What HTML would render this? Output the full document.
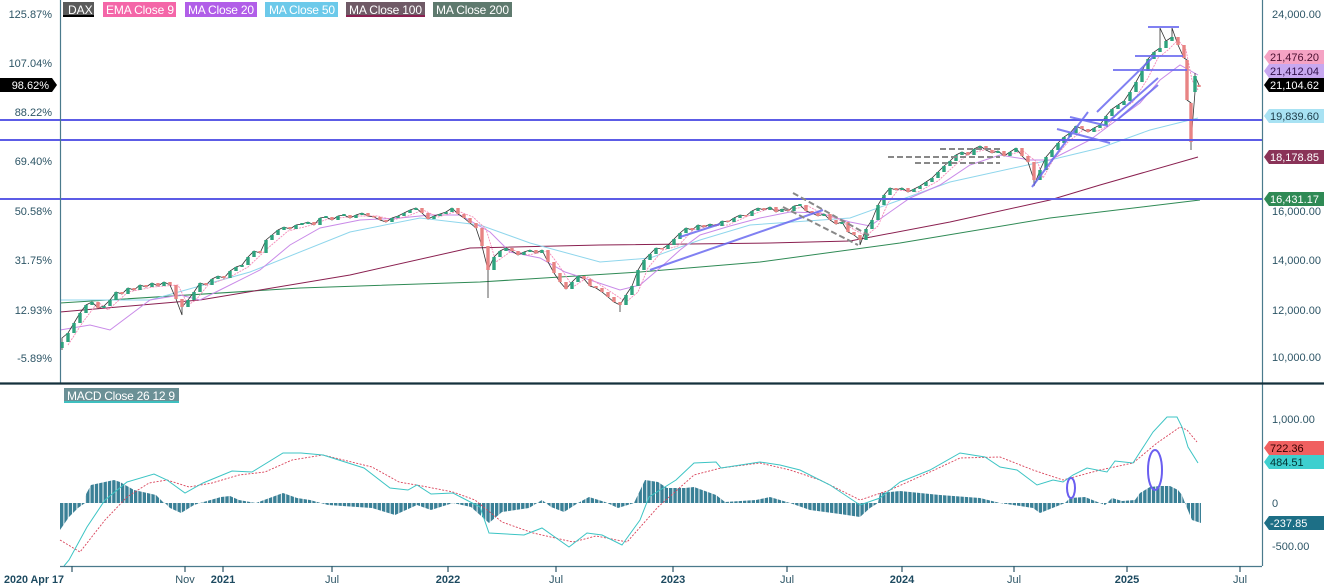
<!DOCTYPE html>
<html><head><meta charset="utf-8"><style>
body{margin:0;background:#fff;width:1324px;height:586px;overflow:hidden;font-family:"Liberation Sans",sans-serif}
svg{display:block}
</style></head><body>
<svg width="1324" height="586" xmlns="http://www.w3.org/2000/svg" font-family="Liberation Sans, sans-serif">
<defs>
<pattern id="hb" x="60" y="0" width="4.35" height="20" patternUnits="userSpaceOnUse"><rect width="3.4" height="20" fill="#3a8096"/></pattern>
</defs>
<rect width="1324" height="586" fill="#fff"/>
<!-- moving averages -->
<polyline fill="none" stroke="#2f8a55" stroke-width="1" points="60,303 300,288 480,282 640,272 760,262 900,243 1050,218 1200,200"/>
<polyline fill="none" stroke="#8a2050" stroke-width="1" points="60,312 200,300 350,275 470,248 600,245 770,243 850,241 950,222 1050,200 1100,185 1198,157"/>
<polyline fill="none" stroke="#8fd6ec" stroke-width="1" points="60,300 150,300 250,272 350,232 420,218 480,225 530,243 600,262 650,258 700,240 750,225 850,218 900,200 950,182 1050,160 1100,148 1150,130 1198,118"/>
<polyline fill="none" stroke="#c98ae8" stroke-width="1" points="60,330 90,325 110,330 130,315 150,300 180,295 200,300 220,290 260,270 290,245 320,228 360,220 400,218 430,215 460,215 490,232 510,252 540,258 565,272 590,280 620,290 640,285 660,268 680,250 700,235 730,226 760,218 790,212 820,213 850,222 870,226 890,212 910,198 940,185 970,165 1000,155 1030,160 1050,160 1070,150 1090,140 1110,125 1140,103 1160,80 1180,65 1198,75"/>
<polyline fill="none" stroke="#f58ab8" stroke-width="0.9" stroke-dasharray="2,1" points="68,345 83,322 98,302 108,310 128,292 153,287 178,285 188,305 196,300 208,285 230,277 248,267 268,248 288,231 308,226 328,219 358,216 378,216 393,220 408,216 423,210 438,217 458,211 473,217 486,229 496,262 503,257 513,250 528,255 548,251 558,264 573,287 588,277 608,290 626,302 638,292 648,268 663,250 678,246 693,230 708,226 728,225 748,216 768,209 788,210 808,206 823,214 838,219 853,229 866,236 878,226 888,203 898,190 918,192 938,181 953,167 968,154 988,149 1008,155 1023,151 1038,163 1043,178 1053,160 1068,142 1083,130 1098,131 1108,126 1118,112 1133,102 1148,78 1158,58 1168,50 1178,40 1186,50 1192,80 1198,90"/>
<!-- wick/close line -->
<polyline fill="none" stroke="#333" stroke-width="0.8" points="62,350 62,338 68,333 74,323 80,313 86,305 92,302 98,308 104,306 110,300 116,292 122,294 128,288 134,290 140,285 146,287 152,283 158,286 164,282 170,285 176,299 182,315 182,307 188,300 194,292 200,283 206,285 212,279 218,276 224,278 230,271 236,267 242,265 248,257 254,251 260,253 266,240 272,235 278,230 284,227 290,229 296,225 302,224 308,222 314,225 320,218 326,217 332,220 338,216 344,215 350,218 356,215 362,213 368,216 374,217 380,220 386,222 392,218 398,216 404,213 410,210 416,208 422,213 428,219 434,216 440,214 446,212 452,208 458,214 464,218 470,223 476,228 482,246 488,270 488,298 488,270 494,257 500,251 506,248 512,251 518,255 524,252 530,250 536,253 542,250 548,262 554,273 560,282 566,289 572,282 578,276 584,279 590,286 596,288 602,292 608,297 614,302 620,305 620,312 620,305 626,295 632,286 638,270 644,260 650,254 656,248 662,249 668,245 674,239 680,233 686,228 692,230 698,225 704,227 710,224 716,226 722,221 728,222 734,218 740,215 746,216 752,211 758,208 764,210 770,207 776,212 782,209 788,211 794,206 800,205 806,211 812,213 818,216 824,214 830,220 836,224 842,222 848,232 854,235 860,240 860,245 866,229 872,220 878,205 884,195 890,188 896,190 902,188 908,192 914,189 920,186 926,182 932,178 938,172 944,166 950,161 956,155 962,152 968,155 974,149 980,146 986,150 992,153 998,151 1004,156 1010,152 1016,148 1022,156 1028,162 1034,180 1034,186 1040,170 1046,157 1052,150 1058,143 1064,137 1070,133 1076,126 1082,129 1088,132 1094,128 1100,125 1106,116 1112,109 1118,105 1124,101 1130,92 1136,82 1142,71 1148,59 1154,52 1160,48 1160,28 1166,41 1172,37 1172,28 1178,45 1184,58 1187,60 1187,100 1191,103 1191,150 1191,142 1195,92 1195,73 1195,76 1199,85 1199,87"/>
<!-- green bodies -->
<path fill="none" stroke="#2ea37e" stroke-width="3.4" d="M62 348V342M68 342V333M74 333V323M80 323V313M86 313V305M92 305V302M104 308V306M110 306V300M116 300V292M128 294V288M140 290V285M152 287V283M164 286V282M188 307V300M194 300V292M200 292V283M212 285V279M218 279V276M230 278V271M236 271V267M242 267V265M248 265V257M254 257V251M266 253V240M272 240V235M278 235V230M284 230V227M296 229V225M302 225V223M308 224V222M320 225V218M326 218V216M338 220V216M344 216V214M356 218V215M362 215V213M392 222V218M398 218V216M404 216V213M410 213V210M416 210V208M434 219V216M440 216V214M446 214V212M452 212V208M494 270V257M500 257V251M506 251V248M524 255V252M530 252V250M542 253V250M572 289V282M578 282V276M626 305V295M632 295V286M638 286V270M644 270V260M650 260V254M656 254V248M668 249V245M674 245V239M680 239V233M686 233V228M698 230V225M710 227V224M722 226V221M734 222V218M740 218V215M752 216V211M758 211V208M770 210V207M782 212V209M794 211V206M800 206V204M824 216V214M842 224V222M866 240V229M872 229V220M878 220V205M884 205V195M890 195V188M902 190V188M914 192V189M920 189V186M926 186V182M932 182V178M938 178V172M944 172V166M950 166V161M956 161V155M962 155V152M974 155V149M980 149V146M998 153V151M1010 156V152M1016 152V148M1040 180V170M1046 170V157M1052 157V150M1058 150V143M1064 143V137M1070 137V133M1076 133V126M1094 132V128M1100 128V125M1106 125V116M1112 116V109M1118 109V105M1124 105V101M1130 101V92M1136 92V82M1142 82V71M1148 71V59M1154 59V52M1160 52V48M1166 48V41M1172 41V37M1195 92V76"/>
<!-- red bodies -->
<path fill="none" stroke="#e88484" stroke-width="3.4" d="M98 302V308M122 292V294M134 288V290M146 285V287M158 283V286M170 282V285M176 285V299M182 299V307M206 283V285M224 276V278M260 251V253M290 227V229M314 222V225M332 217V220M350 215V218M368 213V216M374 216V217.5M380 217V220M386 220V222M422 208V213M428 213V219M458 208V214M464 214V218M470 218V223M476 223V228M482 228V246M488 246V270M512 248V251M518 251V255M536 250V253M548 250V262M554 262V273M560 273V282M566 282V289M584 276V279M590 279V286M596 286V288M602 288V292M608 292V297M614 297V302M620 302V305M662 248V249.5M692 228V230M704 225V227M716 224V226M728 220.5V222M746 215V216.5M764 208V210M776 207V212M788 209V211M806 205V211M812 211V213M818 213V216M830 214V220M836 220V224M848 222V232M854 232V235M860 235V240M896 188V190M908 188V192M968 152V155M986 146V150M992 150V153M1004 151V156M1022 148V156M1028 156V162M1034 162V180M1082 126V129M1088 129V132M1178 37V45M1184 45V58M1187 60V100M1191 103V142M1199 85V87"/>
<!-- drawings -->
<g stroke="#5c5ce6" stroke-width="2">
<line x1="0" y1="120" x2="1262" y2="120"/><line x1="0" y1="140" x2="1262" y2="140"/><line x1="0" y1="199" x2="1262" y2="199"/>
</g>
<g stroke="#6a6af0" stroke-width="2" opacity="0.85">
<line x1="650" y1="270" x2="823" y2="210"/><line x1="680" y1="237" x2="720" y2="224"/>
<line x1="1032" y1="187" x2="1088" y2="112"/><line x1="1070" y1="117" x2="1108" y2="126"/>
<line x1="1057" y1="129" x2="1110" y2="143"/><line x1="1097" y1="112" x2="1153" y2="57"/>
<line x1="1108" y1="122" x2="1158" y2="78"/><line x1="1117" y1="120" x2="1158" y2="85"/>
<line x1="1113" y1="70" x2="1187" y2="70"/><line x1="1135" y1="56" x2="1183" y2="56"/>
<line x1="1148" y1="27" x2="1179" y2="27"/>
</g>
<g stroke="#888" stroke-width="2" stroke-dasharray="6,3">
<line x1="793" y1="193" x2="872" y2="237"/><line x1="783" y1="207" x2="858" y2="245"/>
<line x1="888" y1="157" x2="1000" y2="157"/><line x1="915" y1="163" x2="1000" y2="163"/><line x1="940" y1="149" x2="1000" y2="149"/>
</g>
<!-- MACD histogram -->
<polygon fill="url(#hb)" points="60,503 60,530 69,517 78,508 85,503 85,496 91,485 114,480 120,482 134,490 156,495 163,502 165,503 170,508 181,513 194,505 200,503 221,497 230,496 239,500 256,503 283,493 297,498 310,500 328,505 372,508 395,515 417,505 431,510 453,503 471,507 489,523 502,512 529,508 542,500 551,507 564,512 578,503 589,497 605,502 618,508 634,503 645,480 658,482 667,488 685,488 694,487 716,495 725,502 756,500 770,497 790,503 810,510 840,514 860,517 870,508 878,503 880,493 900,491 940,495 980,498 1000,503 1033,508 1040,513 1055,507 1065,503 1070,498 1085,497 1095,501 1105,505 1112,498 1122,501 1135,500 1140,493 1145,490 1150,487 1160,486 1170,486 1178,490 1182,495 1185,503 1187,508 1192,520 1201,523 1201,503"/>
<polyline fill="none" stroke="#d9435a" stroke-width="0.9" stroke-dasharray="2,1.5" points="60,540 80,552 105,520 127,497 149,483 167,480 189,487 212,483 239,475 265,472 292,460 323,455 372,467 399,482 422,486 453,492 475,500 502,522 533,533 573,542 596,536 627,542 658,507 694,475 721,468 760,463 790,470 820,480 860,500 890,490 930,472 960,458 1000,457 1033,470 1063,480 1100,470 1133,463 1157,443 1180,427 1187,430 1197,442"/>
<polyline fill="none" stroke="#3cc4c4" stroke-width="1" points="64,566 69,560 87,527 105,500 127,482 154,474 167,480 185,493 203,483 232,471 252,472 283,453 301,453 323,455 364,468 390,488 408,490 417,485 431,494 453,493 480,507 489,533 524,535 542,528 569,547 587,533 602,535 622,545 640,520 649,497 676,480 694,463 716,462 721,468 760,462 780,465 800,470 830,485 860,505 880,498 900,482 930,470 960,453 985,457 1000,467 1017,470 1037,485 1053,480 1063,482 1073,475 1087,468 1107,472 1115,461 1133,463 1153,432 1167,417 1177,417 1182,427 1188,447 1198,463"/>
<ellipse cx="1071" cy="488" rx="4" ry="10" fill="none" stroke="#6a5ef0" stroke-width="2"/>
<ellipse cx="1155" cy="470" rx="7" ry="20" fill="none" stroke="#6a5ef0" stroke-width="2"/>
<!-- axes -->
<line x1="60.5" y1="0" x2="60.5" y2="383" stroke="#4a7a8c" stroke-width="1.2"/>
<line x1="1262.5" y1="0" x2="1262.5" y2="566" stroke="#4a7a8c" stroke-width="1.2"/>
<line x1="0" y1="383.5" x2="1324" y2="383.5" stroke="#14303c" stroke-width="2.2"/>
<line x1="60" y1="566.5" x2="1262" y2="566.5" stroke="#4a7a8c" stroke-width="1.2"/>
<g stroke="#2d5566" stroke-width="1.2">
<line x1="72" y1="566" x2="72" y2="572"/><line x1="185" y1="566" x2="185" y2="572"/><line x1="223" y1="566" x2="223" y2="572"/><line x1="332" y1="566" x2="332" y2="572"/><line x1="448" y1="566" x2="448" y2="572"/><line x1="556" y1="566" x2="556" y2="572"/><line x1="673" y1="566" x2="673" y2="572"/><line x1="787" y1="566" x2="787" y2="572"/><line x1="902" y1="566" x2="902" y2="572"/><line x1="1014" y1="566" x2="1014" y2="572"/><line x1="1127" y1="566" x2="1127" y2="572"/><line x1="1240" y1="566" x2="1240" y2="572"/>
</g>
<g font-size="11" fill="#2d5566" text-anchor="middle">
<text x="4" y="583" text-anchor="start" font-weight="bold" fill="#1d4a60" textLength="60" lengthAdjust="spacingAndGlyphs">2020 Apr 17</text>
<text x="185" y="583">Nov</text><text x="223" y="583" font-weight="bold" fill="#1d4a60">2021</text>
<text x="332" y="583">Jul</text><text x="448" y="583" font-weight="bold" fill="#1d4a60">2022</text>
<text x="556" y="583">Jul</text><text x="673" y="583" font-weight="bold" fill="#1d4a60">2023</text>
<text x="787" y="583">Jul</text><text x="902" y="583" font-weight="bold" fill="#1d4a60">2024</text>
<text x="1014" y="583">Jul</text><text x="1127" y="583" font-weight="bold" fill="#1d4a60">2025</text>
<text x="1240" y="583">Jul</text>
</g>
<g font-size="11" fill="#2d5566" text-anchor="end">
<text x="52" y="18">125.87%</text><text x="52" y="67">107.04%</text>
<text x="52" y="116">88.22%</text><text x="52" y="165">69.40%</text><text x="52" y="215">50.58%</text>
<text x="52" y="264">31.75%</text><text x="52" y="314">12.93%</text><text x="52" y="362">-5.89%</text>
</g>
<path d="M0 78 H52 L57 85 L52 92 H0 Z" fill="#000"/>
<text x="49" y="89" font-size="11" fill="#fff" text-anchor="end">98.62%</text>
<g font-size="11" fill="#2d5566">
<text x="1272" y="18">24,000.00</text><text x="1272" y="215">16,000.00</text>
<text x="1272" y="264">14,000.00</text><text x="1272" y="314">12,000.00</text><text x="1272" y="361">10,000.00</text>
<text x="1272" y="423">1,000.00</text><text x="1272" y="507">0</text><text x="1272" y="550">-500.00</text>
</g>
<g font-size="11">
<path d="M1269 50 H1324 V64 H1269 L1264 57Z" fill="#f5a3c4"/><text x="1270" y="61" fill="#4a1030">21,476.20</text>
<path d="M1269 64 H1324 V78 H1269 L1264 71Z" fill="#c7a8f0"/><text x="1270" y="75" fill="#30104a">21,412.04</text>
<path d="M1269 78 H1324 V92 H1269 L1264 85Z" fill="#000"/><text x="1270" y="89" fill="#fff">21,104.62</text>
<path d="M1269 109 H1324 V123 H1269 L1264 116Z" fill="#a8e2f3"/><text x="1270" y="120" fill="#1d3b48">19,839.60</text>
<path d="M1269 150 H1324 V164 H1269 L1264 157Z" fill="#8a3358"/><text x="1270" y="161" fill="#fff">18,178.85</text>
<path d="M1269 192 H1324 V206 H1269 L1264 199Z" fill="#2f8a55"/><text x="1270" y="203" fill="#fff">16,431.17</text>
<path d="M1269 441 H1324 V455 H1269 L1264 448Z" fill="#f06060"/><text x="1270" y="452" fill="#300">722.36</text>
<path d="M1269 455 H1324 V469 H1269 L1264 462Z" fill="#3ecfcf"/><text x="1270" y="466" fill="#033">484.51</text>
<path d="M1269 516 H1324 V530 H1269 L1264 523Z" fill="#1d6f86"/><text x="1270" y="527" fill="#fff">-237.85</text>
</g>
<g font-size="12" fill="#fff">
<rect x="63" y="2" width="31" height="15" fill="#5a5a5a"/><rect x="63" y="15" width="31" height="2" fill="#000"/><text x="68" y="14">DAX</text>
<rect x="103" y="2" width="73" height="15" fill="#f466a8"/><text x="106" y="14" textLength="68">EMA Close 9</text>
<rect x="185" y="2" width="72" height="15" fill="#b15ee8"/><text x="188" y="14" textLength="66">MA Close 20</text>
<rect x="265" y="2" width="73" height="15" fill="#6cc9ea"/><text x="269" y="14" textLength="66">MA Close 50</text>
<rect x="346" y="2" width="79" height="15" fill="#6f5a66"/><rect x="346" y="15" width="79" height="2" fill="#8a2050"/><text x="349" y="14" textLength="73">MA Close 100</text>
<rect x="433" y="2" width="79" height="15" fill="#5e7a6e"/><text x="436" y="14" textLength="73">MA Close 200</text>
<rect x="64" y="388" width="115" height="15" fill="#6b9096"/><rect x="64" y="401" width="115" height="2" fill="#3fbfbf"/><text x="67" y="400" textLength="108">MACD Close 26 12 9</text>
</g>
</svg>
</body></html>
